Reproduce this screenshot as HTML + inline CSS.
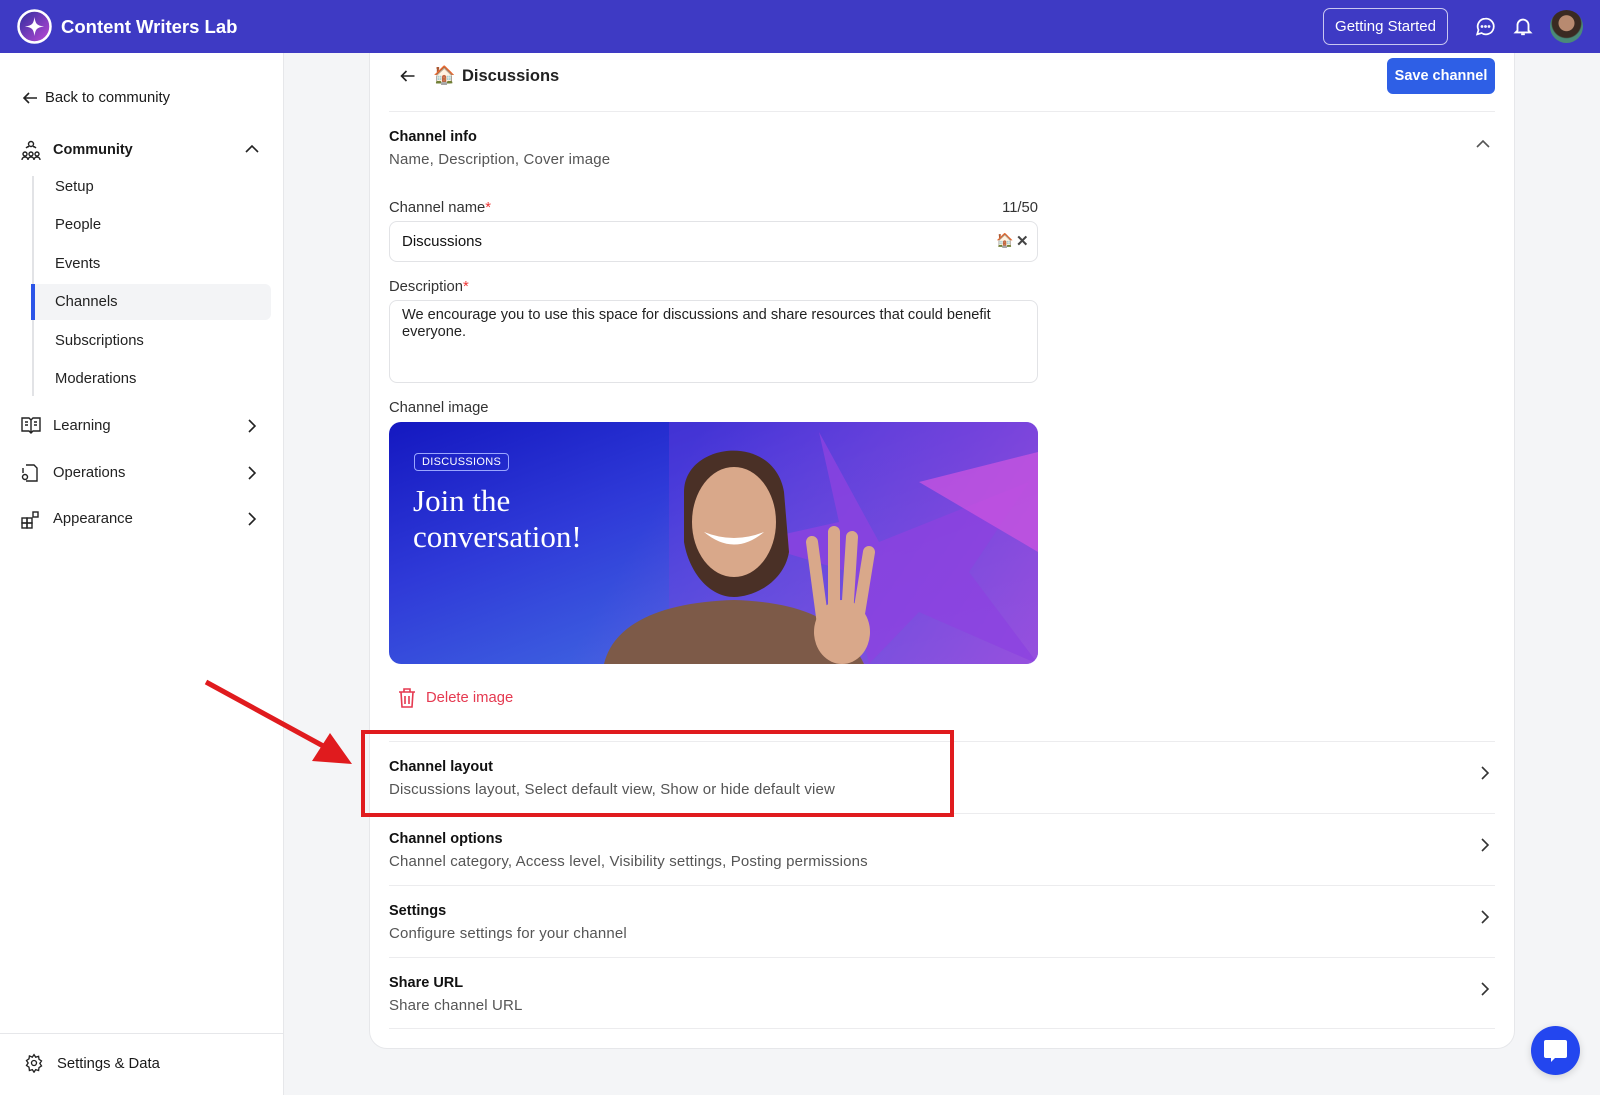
<!DOCTYPE html>
<html><head><meta charset="utf-8"><style>
*{box-sizing:border-box;margin:0;padding:0}
body{width:1600px;height:1095px;overflow:hidden;background:#f4f5f7;font-family:"Liberation Sans","Noto Sans CJK SC",sans-serif;color:#1a1a1a;position:relative;font-size:14.5px}
.a{position:absolute}
.hdr{left:0;top:0;width:1600px;height:53px;background:#3e3ac4}
.side{left:0;top:53px;width:284px;height:1042px;background:#fff;border-right:1px solid #e6e7ea}
.card{left:369px;top:53px;width:1146px;height:996px;background:#fff;border:1px solid #e6e7ea;border-top:none;border-radius:0 0 18px 18px}
.t{font-weight:bold;font-size:14.5px;color:#111}
.s{color:#555;font-size:15px;letter-spacing:.15px}
.hr{height:1px;background:#ececee;left:389px;width:1106px}
.chev{left:1478px;width:14px;height:14px}
.sub{left:55px;font-size:14.8px;color:#222}
</style></head><body>
<div class="a hdr"></div>
<svg class="a" style="left:17px;top:9px" width="35" height="35" viewBox="0 0 35 35"><defs><linearGradient id="g" x1="0" y1="0" x2="1" y2="1"><stop offset="0" stop-color="#2a2c9c"/><stop offset="1" stop-color="#c04ad8"/></linearGradient></defs><circle cx="17.5" cy="17.5" r="16" fill="url(#g)" stroke="#fff" stroke-width="2.5"/><path d="M17.5 8 C18.5 15 20 16.5 27 17.5 C20 18.5 18.5 20 17.5 27 C16.5 20 15 18.5 8 17.5 C15 16.5 16.5 15 17.5 8Z" fill="#fff"/></svg>
<div class="a" style="left:61px;top:16px;color:#fff;font-weight:bold;font-size:18.5px">Content Writers Lab</div>
<div class="a" style="left:1323px;top:8px;width:125px;height:37px;border:1.5px solid #c9c7f0;border-radius:7px;color:#fff;font-size:15px;display:flex;align-items:center;justify-content:center">Getting Started</div>
<svg class="a" style="left:1475px;top:16px" width="21" height="21" viewBox="0 0 24 24" fill="none" stroke="#fff" stroke-width="2"><path d="M12 3a9 9 0 0 0-8 13l-1.5 5 5-1.5A9 9 0 1 0 12 3z"/><circle cx="8" cy="12" r=".6" fill="#fff"/><circle cx="12" cy="12" r=".6" fill="#fff"/><circle cx="16" cy="12" r=".6" fill="#fff"/></svg>
<svg class="a" style="left:1512px;top:15px" width="22" height="22" viewBox="0 0 24 24" fill="none" stroke="#fff" stroke-width="2"><path d="M6 17V11a6 6 0 0 1 12 0v6l2 2H4z"/><path d="M10 21h4"/></svg>
<div class="a" style="left:1550px;top:10px;width:33px;height:33px;border-radius:50%;background:radial-gradient(circle at 50% 40%,#b88a70 0 30%,#3a2a22 32% 55%,#4a8a78 60%)"></div>

<div class="a side"></div>
<svg class="a" style="left:22px;top:90px" width="16" height="16" viewBox="0 0 16 16" fill="none" stroke="#222" stroke-width="1.6"><path d="M15 8H2M7 3L2 8l5 5"/></svg>
<div class="a" style="left:45px;top:90px;font-size:14.8px">Back to community</div>
<svg class="a" style="left:20px;top:139px" width="22" height="22" viewBox="0 0 22 22" fill="none" stroke="#222" stroke-width="1.4"><circle cx="11" cy="5" r="2.5"/><circle cx="5" cy="15" r="2"/><circle cx="11" cy="15" r="2"/><circle cx="17" cy="15" r="2"/><path d="M2 21c0-2 1.5-3 3-3s3 1 3 3M8 21c0-2 1.5-3 3-3s3 1 3 3M14 21c0-2 1.5-3 3-3s3 1 3 3M6 9c1-1 2-1.5 3-1.5M16 9c-1-1-2-1.5-3-1.5"/></svg>
<div class="a" style="left:53px;top:142px;font-weight:bold;font-size:14.5px">Community</div>
<svg class="a" style="left:245px;top:144px" width="14" height="10" viewBox="0 0 14 10" fill="none" stroke="#222" stroke-width="1.6"><path d="M1 8l6-6 6 6"/></svg>
<div class="a" style="left:32px;top:176px;width:2px;height:220px;background:#e2e3e6"></div>
<div class="a" style="left:33px;top:284px;width:238px;height:36px;background:#f3f4f6;border-radius:0 6px 6px 0"></div>
<div class="a" style="left:31px;top:284px;width:4px;height:36px;background:#2c55e8"></div>
<div class="a sub" style="top:179px">Setup</div>
<div class="a sub" style="top:217px">People</div>
<div class="a sub" style="top:256px">Events</div>
<div class="a sub" style="top:294px">Channels</div>
<div class="a sub" style="top:333px">Subscriptions</div>
<div class="a sub" style="top:371px">Moderations</div>
<svg class="a" style="left:21px;top:417px" width="20" height="17" viewBox="0 0 20 17" fill="none" stroke="#222" stroke-width="1.4"><path d="M1 1h7l2 2 2-2h7v13h-7l-2 2-2-2H1z M10 3v13"/><path d="M4 5h3M4 8h3M13 5h3M13 8h3"/></svg>
<div class="a sub" style="left:53px;top:418px">Learning</div>
<svg class="a" style="left:21px;top:463px" width="18" height="20" viewBox="0 0 18 20" fill="none" stroke="#222" stroke-width="1.4"><path d="M5 2h8l3 3v13H5M2 10V5"/><circle cx="4" cy="14" r="2.5"/></svg>
<div class="a sub" style="left:53px;top:465px">Operations</div>
<svg class="a" style="left:21px;top:510px" width="19" height="19" viewBox="0 0 19 19" fill="none" stroke="#222" stroke-width="1.4"><rect x="1" y="8" width="5" height="5"/><rect x="6" y="8" width="5" height="5"/><rect x="1" y="13" width="5" height="5"/><rect x="6" y="13" width="5" height="5"/><rect x="12" y="2" width="5" height="5"/></svg>
<div class="a sub" style="left:53px;top:511px">Appearance</div>
<svg class="a" style="left:247px;top:419px" width="10" height="14" viewBox="0 0 10 14" fill="none" stroke="#222" stroke-width="1.6"><path d="M2 1l6 6-6 6"/></svg>
<svg class="a" style="left:247px;top:466px" width="10" height="14" viewBox="0 0 10 14" fill="none" stroke="#222" stroke-width="1.6"><path d="M2 1l6 6-6 6"/></svg>
<svg class="a" style="left:247px;top:512px" width="10" height="14" viewBox="0 0 10 14" fill="none" stroke="#222" stroke-width="1.6"><path d="M2 1l6 6-6 6"/></svg>
<div class="a" style="left:0;top:1033px;width:284px;height:1px;background:#e6e7ea"></div>
<svg class="a" style="left:24px;top:1053px" width="20" height="20" viewBox="0 0 24 24" fill="none" stroke="#222" stroke-width="1.6"><circle cx="12" cy="12" r="3"/><path d="M12 2l2 3 3.5-1 .5 3.5 3 2-2 3 2 3-3 2-.5 3.5-3.5-1-2 3-2-3-3.5 1L6 17l-3-2 2-3-2-3 3-2 .5-3.5L10 5z"/></svg>
<div class="a" style="left:57px;top:1056px;font-size:14.8px">Settings &amp; Data</div>

<div class="a card"></div>
<svg class="a" style="left:399px;top:68px" width="17" height="16" viewBox="0 0 16 16" fill="none" stroke="#222" stroke-width="1.6"><path d="M15 8H2M7 3L2 8l5 5"/></svg>
<div class="a" style="left:433px;top:65px;font-size:18px">🏠</div>
<div class="a" style="left:462px;top:67px;font-size:16.5px;font-weight:bold;color:#222">Discussions</div>
<div class="a" style="left:1387px;top:58px;width:108px;height:36px;background:#2e5fe6;border-radius:6px;color:#fff;font-weight:bold;font-size:14.5px;text-align:center;line-height:36px">Save channel</div>
<div class="a hr" style="top:111px"></div>
<div class="a t" style="left:389px;top:129px">Channel info</div>
<div class="a s" style="left:389px;top:151px">Name, Description, Cover image</div>
<svg class="a" style="left:1476px;top:139px" width="14" height="10" viewBox="0 0 14 10" fill="none" stroke="#555" stroke-width="1.6"><path d="M1 8l6-6 6 6"/></svg>

<div class="a" style="left:389px;top:200px;color:#333;font-size:14.8px">Channel name<span style="color:#e33">*</span></div>
<div class="a" style="left:990px;top:200px;width:48px;text-align:right;color:#333;font-size:14.8px">11/50</div>
<div class="a" style="left:389px;top:221px;width:649px;height:41px;border:1px solid #e2e3e6;border-radius:8px"></div>
<div class="a" style="left:402px;top:233px;font-size:15px;color:#111">Discussions</div>
<div class="a" style="left:996px;top:232px;font-size:14px">🏠</div>
<div class="a" style="left:1016px;top:232px;font-size:15px;font-weight:bold;color:#444">✕</div>
<div class="a" style="left:389px;top:279px;color:#333;font-size:14.8px">Description<span style="color:#e33">*</span></div>
<div class="a" style="left:389px;top:300px;width:649px;height:83px;border:1px solid #e2e3e6;border-radius:8px"></div>
<div class="a" style="left:402px;top:307px;width:630px;font-size:14.6px;line-height:17px;color:#222">We encourage you to use this space for discussions and share resources that could benefit everyone.</div>
<div class="a" style="left:389px;top:400px;color:#333;font-size:14.8px">Channel image</div>

<div class="a" style="left:389px;top:422px;width:649px;height:242px;border-radius:12px;overflow:hidden;background:linear-gradient(160deg,#1418c0 0%,#2f3ad8 35%,#4c86e8 100%)">
 <div class="a" style="left:0;top:0;width:649px;height:242px;background:linear-gradient(120deg,transparent 40%,rgba(160,70,220,.55) 75%,rgba(190,80,220,.8) 100%)"></div>
 <svg class="a" style="left:280px;top:0" width="369" height="242" viewBox="0 0 369 242"><path d="M0 0H369V242H0z" fill="rgba(120,60,220,.35)"/><path d="M150 10 L210 120 L360 60 L300 150 L369 242 L250 190 L200 242 L180 150 L80 120 L170 100Z" fill="#8c42e0" opacity=".8"/><path d="M250 60 L369 30 L369 130 Z" fill="#d055e0" opacity=".7"/></svg>
 <div class="a" style="left:25px;top:31px;padding:2px 7px;border:1px solid #9aa6ff;border-radius:4px;color:#fff;font-size:11px;letter-spacing:.3px">DISCUSSIONS</div>
 <div class="a" style="left:24px;top:61px;color:#fff;font-family:'Liberation Serif',serif;font-size:31px;line-height:36px">Join the<br>conversation!</div>
 <svg class="a" style="left:195px;top:10px" width="320" height="232" viewBox="0 0 320 232"><path d="M100 60 C100 10 190 0 200 60 L205 120 C200 150 170 165 150 165 C125 165 105 140 100 110Z" fill="#4a3026"/><ellipse cx="150" cy="90" rx="42" ry="55" fill="#d9a88a"/><path d="M120 100 Q150 125 180 100 Q150 112 120 100Z" fill="#fff"/><path d="M20 232 C30 190 80 170 150 168 C220 170 260 190 280 232Z" fill="#7d5a48"/><path d="M240 200 L228 110 M250 200 L250 100 M262 200 L268 105 M272 200 L285 120" stroke="#d9a88a" stroke-width="12" stroke-linecap="round"/><ellipse cx="258" cy="200" rx="28" ry="32" fill="#d9a88a"/></svg>
</div>

<svg class="a" style="left:398px;top:688px" width="18" height="20" viewBox="0 0 18 20" fill="none" stroke="#e53950" stroke-width="1.6"><path d="M1 4h16M6 4V1h6v3M3 4l1 15h10l1-15M7 8v8M11 8v8"/></svg>
<div class="a" style="left:426px;top:690px;color:#e53950;font-size:14.8px">Delete image</div>

<div class="a hr" style="top:741px"></div>
<div class="a t" style="left:389px;top:759px">Channel layout</div>
<div class="a s" style="left:389px;top:781px">Discussions layout, Select default view, Show or hide default view</div>
<div class="a hr" style="top:813px"></div>
<div class="a t" style="left:389px;top:831px">Channel options</div>
<div class="a s" style="left:389px;top:853px">Channel category, Access level, Visibility settings, Posting permissions</div>
<div class="a hr" style="top:885px"></div>
<div class="a t" style="left:389px;top:903px">Settings</div>
<div class="a s" style="left:389px;top:925px">Configure settings for your channel</div>
<div class="a hr" style="top:957px"></div>
<div class="a t" style="left:389px;top:975px">Share URL</div>
<div class="a s" style="left:389px;top:997px">Share channel URL</div>
<div class="a hr" style="top:1028px"></div>
<svg class="a chev" style="top:766px" viewBox="0 0 14 14" fill="none" stroke="#333" stroke-width="1.6"><path d="M4 1l6 6-6 6"/></svg>
<svg class="a chev" style="top:838px" viewBox="0 0 14 14" fill="none" stroke="#333" stroke-width="1.6"><path d="M4 1l6 6-6 6"/></svg>
<svg class="a chev" style="top:910px" viewBox="0 0 14 14" fill="none" stroke="#333" stroke-width="1.6"><path d="M4 1l6 6-6 6"/></svg>
<svg class="a chev" style="top:982px" viewBox="0 0 14 14" fill="none" stroke="#333" stroke-width="1.6"><path d="M4 1l6 6-6 6"/></svg>

<div class="a" style="left:361px;top:730px;width:593px;height:87px;border:4px solid #e01b1e"></div>
<svg class="a" style="left:200px;top:675px" width="160" height="100" viewBox="0 0 160 100"><path d="M6 7 L125 72" stroke="#e01b1e" stroke-width="5"/><path d="M152 89 L112 86 L130 58Z" fill="#e01b1e"/></svg>

<div class="a" style="left:1531px;top:1026px;width:49px;height:49px;border-radius:50%;background:#2346ef;box-shadow:0 2px 8px rgba(0,0,0,.15)"></div>
<svg class="a" style="left:1543px;top:1039px" width="25" height="24" viewBox="0 0 25 24"><path d="M3 1h19a2 2 0 0 1 2 2v14a2 2 0 0 1-2 2H12l-4 4v-4H3a2 2 0 0 1-2-2V3a2 2 0 0 1 2-2z" fill="#fff"/></svg>
</body></html>
